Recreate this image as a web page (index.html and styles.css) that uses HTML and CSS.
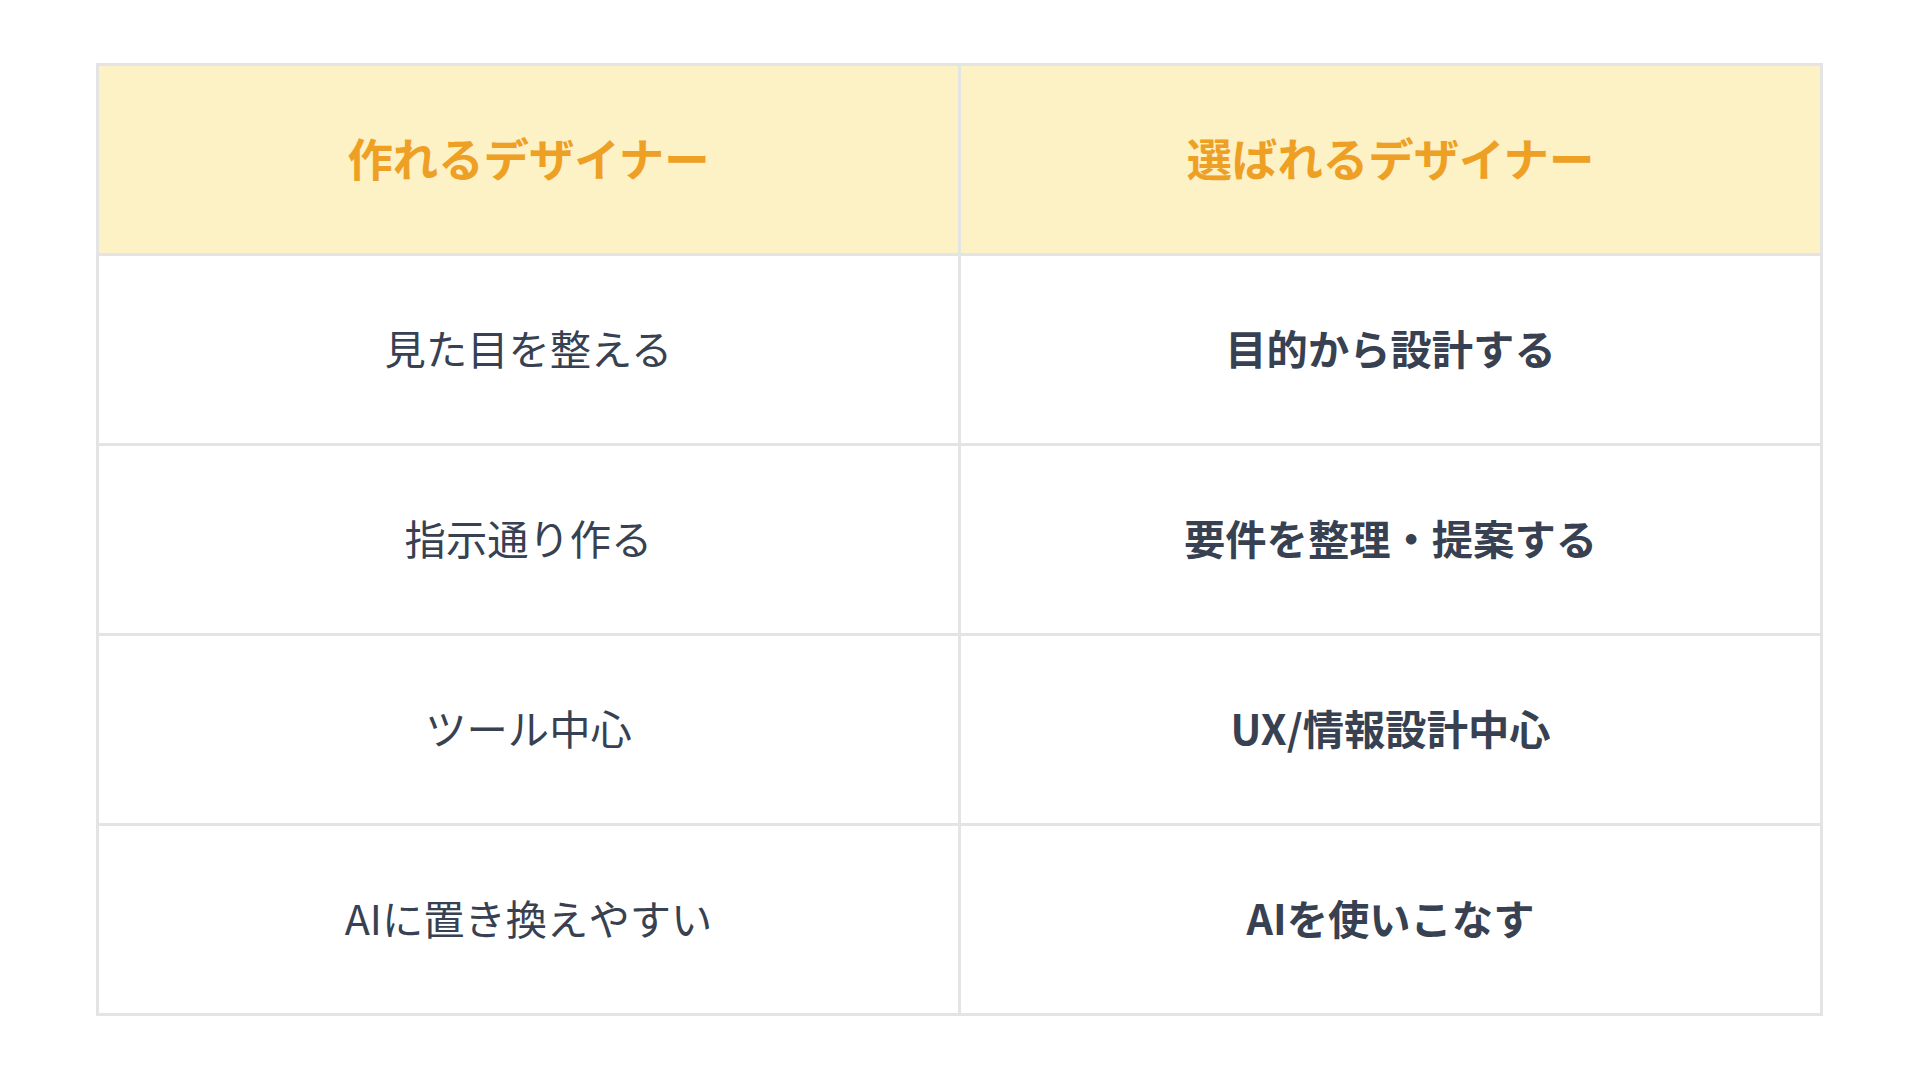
FILE: index.html
```html
<!DOCTYPE html>
<html lang="ja">
<head>
<meta charset="utf-8">
<link rel="stylesheet" href="styles.css">
</head>
<body>
<div class="page">
<table class="cmp">
<thead>
<tr><th>作れるデザイナー</th><th>選ばれるデザイナー</th></tr>
</thead>
<tbody>
<tr><td class="l">見た目を整える</td><td class="r">目的から設計する</td></tr>
<tr><td class="l">指示通り作る</td><td class="r">要件を整理・提案する</td></tr>
<tr><td class="l">ツール中心</td><td class="r">UX/情報設計中心</td></tr>
<tr><td class="l">AIに置き換えやすい</td><td class="r">AIを使いこなす</td></tr>
</tbody>
</table>
</div>
</body>
</html>
```
FILE: styles.css
```css
html, body { margin: 0; padding: 0; background: #ffffff; }
body { font-family: "Noto Sans CJK JP", "Noto Sans", sans-serif; }
.page { width: 1920px; height: 1080px; padding: 63px 0 0 96px; box-sizing: border-box; }
.cmp { border-collapse: collapse; width: 1727px; table-layout: fixed; }
.cmp th, .cmp td { border: 3px solid #e4e4e4; text-align: center; height: 190px; padding: 0 0 5px 0; box-sizing: border-box; }
.cmp th { background: #fdf1c6; color: #eea024; font-size: 45.4px; font-weight: 700; }
.cmp td { color: #374151; font-size: 41.3px; }
.cmp td.l { font-weight: 400; }
.cmp td.r { font-weight: 700; }
```
